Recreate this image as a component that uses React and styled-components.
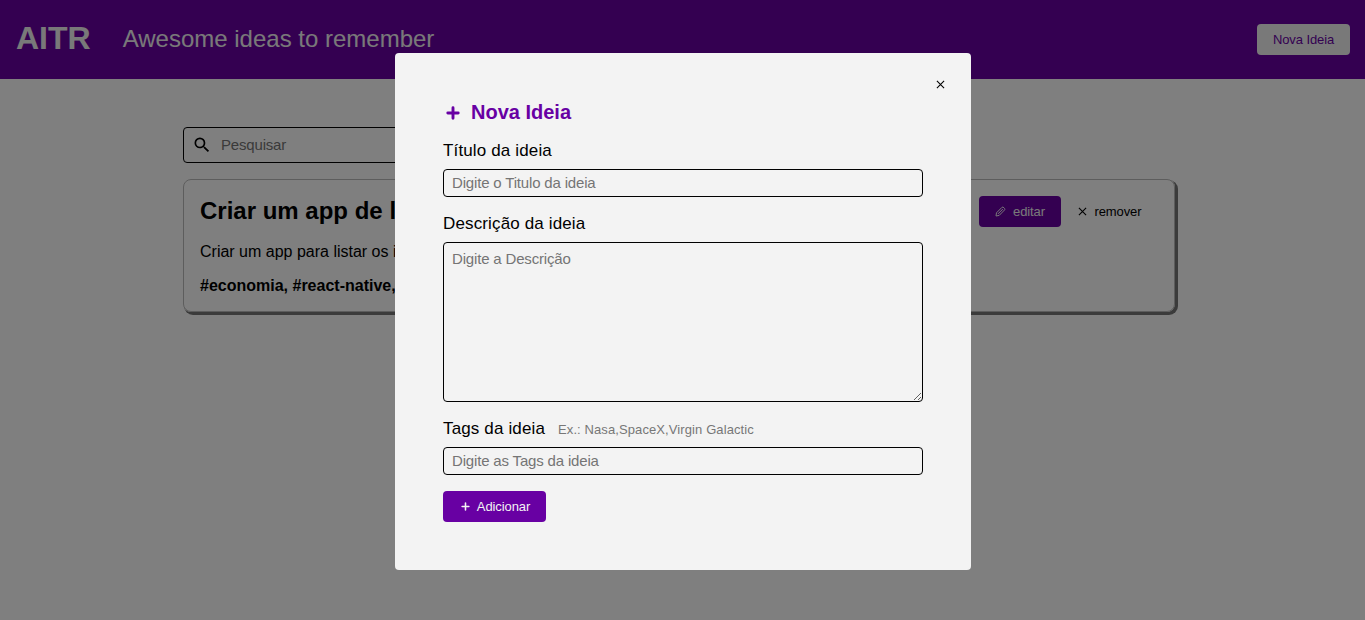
import React from "react";
import styled, { createGlobalStyle } from "styled-components";
import { MdSearch } from "react-icons/md";

const PURPLE = "#6800a3";

const GlobalStyle = createGlobalStyle`
  * { margin: 0; padding: 0; box-sizing: border-box; }
  body {
    min-height: 100vh;
    font-family: "Liberation Sans", Arial, sans-serif;
    background: #fff;
    color: #000;
  }
  button, input, textarea { font-family: inherit; }
`;

const Header = styled.header`
  display: flex;
  align-items: center;
  height: 79px;
  padding: 0 15px 0 16px;
  background: ${PURPLE};
  color: #f3f3f3;
`;

const Brand = styled.h1`
  font-size: 32px;
  line-height: 37px;
  margin: 0 32px 2px 0;
`;

const Slogan = styled.p`
  flex: 1;
  margin-bottom: 2px;
  font-size: 24px;
`;

const Button = styled.button`
  display: inline-flex;
  align-items: center;
  justify-content: center;
  gap: ${(p) => p.$gap ?? 6}px;
  width: ${(p) => p.$width}px;
  height: 31px;
  border: 0;
  border-radius: 4px;
  font-size: 13px;
  letter-spacing: -0.1px;
  background: ${(p) => (p.$kind === "primary" ? PURPLE : p.$kind === "light" ? "#f3f3f3" : "transparent")};
  color: ${(p) => (p.$kind === "primary" ? "#f3f3f3" : p.$kind === "light" ? PURPLE : "#000")};
`;

const Main = styled.main`
  width: 992px;
  margin: 48px 0 0 183px;
`;

const SearchBox = styled.div`
  display: flex;
  align-items: center;
  width: 50%;
  height: 36px;
  padding: 0 8px;
  gap: 9px;
  border: 1px solid #000;
  border-radius: 4px;

  input {
    flex: 1;
    border: 0;
    padding-bottom: 2px;
    background: none;
    font-size: 15px;
    letter-spacing: -0.18px;
  }
`;

const Card = styled.article`
  display: flex;
  justify-content: space-between;
  height: 133px;
  margin-top: 16px;
  padding: 16px;
  border: 1px solid #bbb;
  border-radius: 8px;
  box-shadow: 2px 2px 0 1px #777;
`;

const CardTitle = styled.h2`
  margin-top: 1px;
  font-size: 24px;
  line-height: 28px;
`;

const CardText = styled.p`
  margin-top: 18px;
  font-size: 16px;
  line-height: 18px;
`;

const CardTags = styled.p`
  margin-top: 16px;
  font-size: 16px;
  line-height: 18px;
  font-weight: bold;
`;

const Actions = styled.div`
  display: flex;
`;

const Overlay = styled.div`
  position: fixed;
  inset: 0;
  display: flex;
  align-items: flex-start;
  justify-content: center;
  padding: 53px 0 0 1px;
  background: rgba(0, 0, 0, 0.5);
`;

const Modal = styled.section`
  width: 576px;
  height: 517px;
  padding: 21px 48px 0;
  border-radius: 4px;
  background: #f3f3f3;
`;

const CloseButton = styled.button`
  display: flex;
  align-items: center;
  justify-content: center;
  width: 19px;
  height: 20px;
  margin: 0 -27px 0 auto;
  border: 0;
  background: none;
`;

const ModalTitle = styled.h2`
  display: flex;
  align-items: center;
  gap: 8px;
  margin-top: 6px;
  font-size: 20px;
  line-height: 24px;
  color: ${PURPLE};

  svg {
    position: relative;
    top: 1px;
  }
`;

const Label = styled.label`
  display: block;
  margin-top: ${(p) => p.$top}px;
  font-size: 17px;
  line-height: 20px;
  letter-spacing: 0.14px;

  small {
    margin-left: 13px;
    font-size: 13px;
    letter-spacing: 0.1px;
    color: #777;
  }
`;

const Field = styled.input`
  display: block;
  width: 100%;
  height: 28px;
  margin-top: ${(p) => p.$gap ?? 8}px;
  padding: 0 8px 2px;
  border: 1px solid #000;
  border-radius: 4px;
  background: transparent;
  font-size: 15px;
  letter-spacing: -0.17px;
`;

const Area = styled(Field)`
  height: 160px;
  padding: 7px 8px;
  resize: both;
`;

const Submit = styled.div`
  margin-top: 16px;
`;

const PlusIcon = ({ size, stroke }) => (
  <svg width={size} height={size} viewBox="0 0 20 20" fill="none" stroke="currentColor" strokeWidth={stroke} strokeLinecap="round">
    <path d="M10 4.8v10.4M4.8 10h10.4" />
  </svg>
);

const CrossIcon = ({ size }) => (
  <svg width={size} height={size} viewBox="0 0 10 10" fill="none" stroke="currentColor" strokeWidth="1.2">
    <path d="M1 1l8 8M9 1l-8 8" />
  </svg>
);

const PencilIcon = () => (
  <svg width="11" height="11" viewBox="0 0 11 11" fill="none" stroke="currentColor" strokeWidth="1" strokeLinejoin="round">
    <path d="M1 10l.5-3.2L7 1.3c.9-.9 3.6 1.4 2.6 2.6L4.2 9.4zM3 7.9l4.8-4.8" />
  </svg>
);

export default function App() {
  return (
    <>
      <GlobalStyle />
      <Header>
        <Brand>AITR</Brand>
        <Slogan>Awesome ideas to remember</Slogan>
        <Button $kind="light" $width={93}>Nova Ideia</Button>
      </Header>
      <Main>
        <SearchBox>
          <MdSearch size={20} />
          <input placeholder="Pesquisar" />
        </SearchBox>
        <Card>
          <div>
            <CardTitle>Criar um app de lista</CardTitle>
            <CardText>Criar um app para listar os itens</CardText>
            <CardTags>#economia, #react-native, #app</CardTags>
          </div>
          <Actions>
            <Button $kind="primary" $width={82} $gap={7}><PencilIcon />editar</Button>
            <Button $width={97} $gap={8}><CrossIcon size={9} />remover</Button>
          </Actions>
        </Card>
      </Main>
      <Overlay>
        <Modal>
          <CloseButton aria-label="Fechar"><CrossIcon size={9} /></CloseButton>
          <ModalTitle><PlusIcon size={20} stroke={2.9} />Nova Ideia</ModalTitle>
          <Label $top={17}>Título da ideia</Label>
          <Field placeholder="Digite o Titulo da ideia" />
          <Label $top={17}>Descrição da ideia</Label>
          <Area as="textarea" placeholder="Digite a Descrição" />
          <Label $top={17}>Tags da ideia<small>Ex.: Nasa,SpaceX,Virgin Galactic</small></Label>
          <Field $gap={7} placeholder="Digite as Tags da ideia" />
          <Submit>
            <Button $kind="primary" $width={103} $gap={5}><PlusIcon size={13} stroke={2.4} />Adicionar</Button>
          </Submit>
        </Modal>
      </Overlay>
    </>
  );
}
